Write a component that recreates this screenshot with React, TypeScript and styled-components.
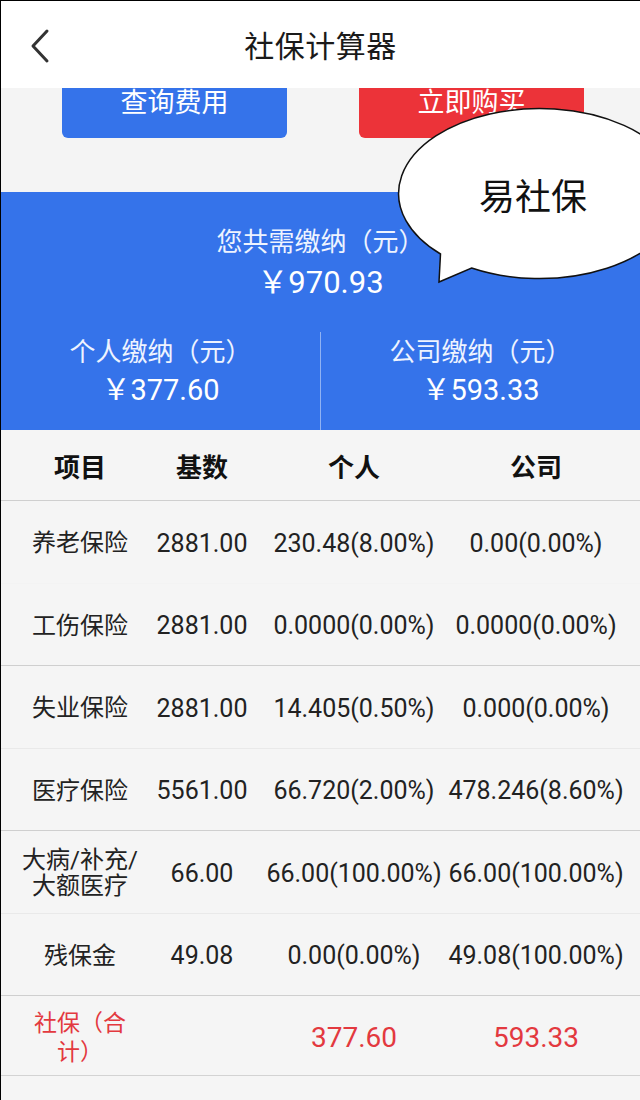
import React from 'react';
import styled, { createGlobalStyle } from 'styled-components';

const GlobalStyle = createGlobalStyle`
  html, body {
    margin: 0;
    padding: 0;
    overflow-x: hidden;
    background: #f5f5f5;
  }
  body {
    font-family: Roboto, "Noto Sans CJK SC", sans-serif;
  }
`;

type Row = {
  name: React.ReactNode;
  base: string;
  person: string;
  company: string;
  dark: boolean;
};

const rows: Row[] = [
  { name: '养老保险', base: '2881.00', person: '230.48(8.00%)', company: '0.00(0.00%)', dark: false },
  { name: '工伤保险', base: '2881.00', person: '0.0000(0.00%)', company: '0.0000(0.00%)', dark: true },
  { name: '失业保险', base: '2881.00', person: '14.405(0.50%)', company: '0.000(0.00%)', dark: false },
  { name: '医疗保险', base: '5561.00', person: '66.720(2.00%)', company: '478.246(8.60%)', dark: true },
  {
    name: (
      <>
        大病/补充/
        <br />
        大额医疗
      </>
    ),
    base: '66.00',
    person: '66.00(100.00%)',
    company: '66.00(100.00%)',
    dark: false,
  },
  { name: '残保金', base: '49.08', person: '0.00(0.00%)', company: '49.08(100.00%)', dark: true },
];

const App = () => {
  return (
    <Page>
      <GlobalStyle />
      <Header>
        <BackButton>
          <svg width="24" height="36" viewBox="0 0 24 36">
            <polyline points="18,3 4,18 18,33" fill="none" stroke="#333" strokeWidth="3" strokeLinecap="round" strokeLinejoin="round" />
          </svg>
        </BackButton>
        <Title>社保计算器</Title>
      </Header>

      <ActionBar>
        <ActionButton $tone="blue">查询费用</ActionButton>
        <ActionButton $tone="red">立即购买</ActionButton>
      </ActionBar>

      <Summary>
        <SummaryLabel>您共需缴纳（元）</SummaryLabel>
        <SummaryAmount $big>￥970.93</SummaryAmount>
        <Split>
          <SplitCol>
            <SummaryLabel>个人缴纳（元）</SummaryLabel>
            <SummaryAmount>￥377.60</SummaryAmount>
          </SplitCol>
          <SplitCol $divider>
            <SummaryLabel>公司缴纳（元）</SummaryLabel>
            <SummaryAmount>￥593.33</SummaryAmount>
          </SplitCol>
        </Split>
      </Summary>

      <Table>
        <HeadRow>
          <Cell $col={0}>项目</Cell>
          <Cell $col={1}>基数</Cell>
          <Cell $col={2}>个人</Cell>
          <Cell $col={3}>公司</Cell>
        </HeadRow>
        {rows.map((row, i) => (
          <BodyRow key={i} $dark={row.dark} $first={i === 0}>
            <Cell $col={0}>
              <NameText>{row.name}</NameText>
            </Cell>
            <Cell $col={1}>{row.base}</Cell>
            <Cell $col={2}>{row.person}</Cell>
            <Cell $col={3}>{row.company}</Cell>
          </BodyRow>
        ))}
        <TotalRow>
          <Cell $col={0}>
            <TotalName>
              社保（合
              <br />
              计）
            </TotalName>
          </Cell>
          <Cell $col={1} />
          <Cell $col={2}>
            <TotalValue>377.60</TotalValue>
          </Cell>
          <Cell $col={3}>
            <TotalValue>593.33</TotalValue>
          </Cell>
        </TotalRow>
      </Table>

      <Bubble>
        <svg width="300" height="190" viewBox="0 0 300 190">
          <path
            d="M49.5,153 L48,181 L80.6,167 A141,85 0 1 0 49.5,153 Z"
            fill="#fff"
            stroke="#111"
            strokeWidth="1.5"
          />
        </svg>
        <BubbleText>易社保</BubbleText>
      </Bubble>
    </Page>
  );
};

const colWidths = [158, 86, 218, 146];

const Page = styled.div`
  position: relative;
  overflow: hidden;
  min-height: 1100px;
  box-sizing: border-box;
  border-left: 1px solid #000;
  border-top: 1px solid #000;
  background: #f5f5f5;
`;

const Header = styled.div`
  position: relative;
  height: 87px;
  background: #fff;
  display: flex;
  align-items: center;
  justify-content: center;
`;

const BackButton = styled.div`
  position: absolute;
  left: 28px;
  top: 27px;
  width: 24px;
  height: 36px;
  display: flex;
`;

const Title = styled.div`
  font-size: 30px;
  color: #1a1a1a;
  letter-spacing: 0.5px;
  margin-top: -2px;
`;

const ActionBar = styled.div`
  height: 104px;
  background: #f4f4f4;
  display: flex;
  gap: 72px;
  padding-left: 61px;
`;

const ActionButton = styled.div<{ $tone: 'blue' | 'red' }>`
  width: 225px;
  height: 50px;
  line-height: 30px;
  text-align: center;
  font-size: 27px;
  color: #fff;
  border-radius: 0 0 6px 6px;
  background: ${(p) => (p.$tone === 'blue' ? '#3573ea' : '#ec3339')};
`;

const Summary = styled.div`
  background: #3573ea;
  padding-top: 32px;
  display: flex;
  flex-direction: column;
  align-items: center;
`;

const SummaryLabel = styled.div`
  font-size: 26px;
  line-height: 36px;
  color: #eef3ff;
`;

const SummaryAmount = styled.div<{ $big?: boolean }>`
  font-size: ${(p) => (p.$big ? 31 : 29)}px;
  line-height: 40px;
  margin-top: ${(p) => (p.$big ? 3 : 0)}px;
  color: #fff;
`;

const Split = styled.div`
  margin-top: 29px;
  width: 100%;
  display: flex;
`;

const SplitCol = styled.div<{ $divider?: boolean }>`
  flex: 1;
  display: flex;
  flex-direction: column;
  align-items: center;
  padding: 2px 0 20px;
  border-left: ${(p) => (p.$divider ? '1px solid rgba(255,255,255,0.45)' : 'none')};
`;

const Table = styled.div`
  background: #f5f5f5;
  color: #222;
`;

const HeadRow = styled.div`
  display: flex;
  height: 71px;
  padding-top: 1px;
  box-sizing: border-box;
  border-bottom: 1px solid #cfcfcf;
  font-size: 26px;
  font-weight: bold;
  color: #111;
`;

const BodyRow = styled.div<{ $dark: boolean; $first: boolean }>`
  display: flex;
  height: 82.5px;
  padding-top: 3px;
  box-sizing: border-box;
  font-size: 25px;
  border-bottom: 1px solid
    ${(p) => (p.$first ? '#f3f3f3' : p.$dark ? '#cfcfcf' : '#e9e9e9')};
`;

const TotalRow = styled.div`
  display: flex;
  height: 80px;
  padding-top: 4px;
  box-sizing: border-box;
  border-bottom: 1px solid #d3d3d3;
`;

const Cell = styled.div<{ $col: number }>`
  width: ${(p) => colWidths[p.$col]}px;
  flex-shrink: 0;
  display: flex;
  align-items: center;
  justify-content: center;
  white-space: nowrap;
`;

const NameText = styled.div`
  text-align: center;
  font-size: 24px;
  line-height: 26px;
`;

const TotalName = styled.div`
  font-size: 23px;
  line-height: 29px;
  color: #e3393f;
  text-align: center;
`;

const TotalValue = styled.div`
  font-size: 28px;
  color: #e3393f;
`;

const Bubble = styled.div`
  position: absolute;
  left: 390px;
  top: 100px;
  width: 300px;
  height: 190px;

  svg {
    display: block;
  }
`;

const BubbleText = styled.div`
  position: absolute;
  left: 142px;
  top: 93px;
  transform: translate(-50%, -50%);
  font-size: 36px;
  color: #111;
  white-space: nowrap;
`;

export default App;
